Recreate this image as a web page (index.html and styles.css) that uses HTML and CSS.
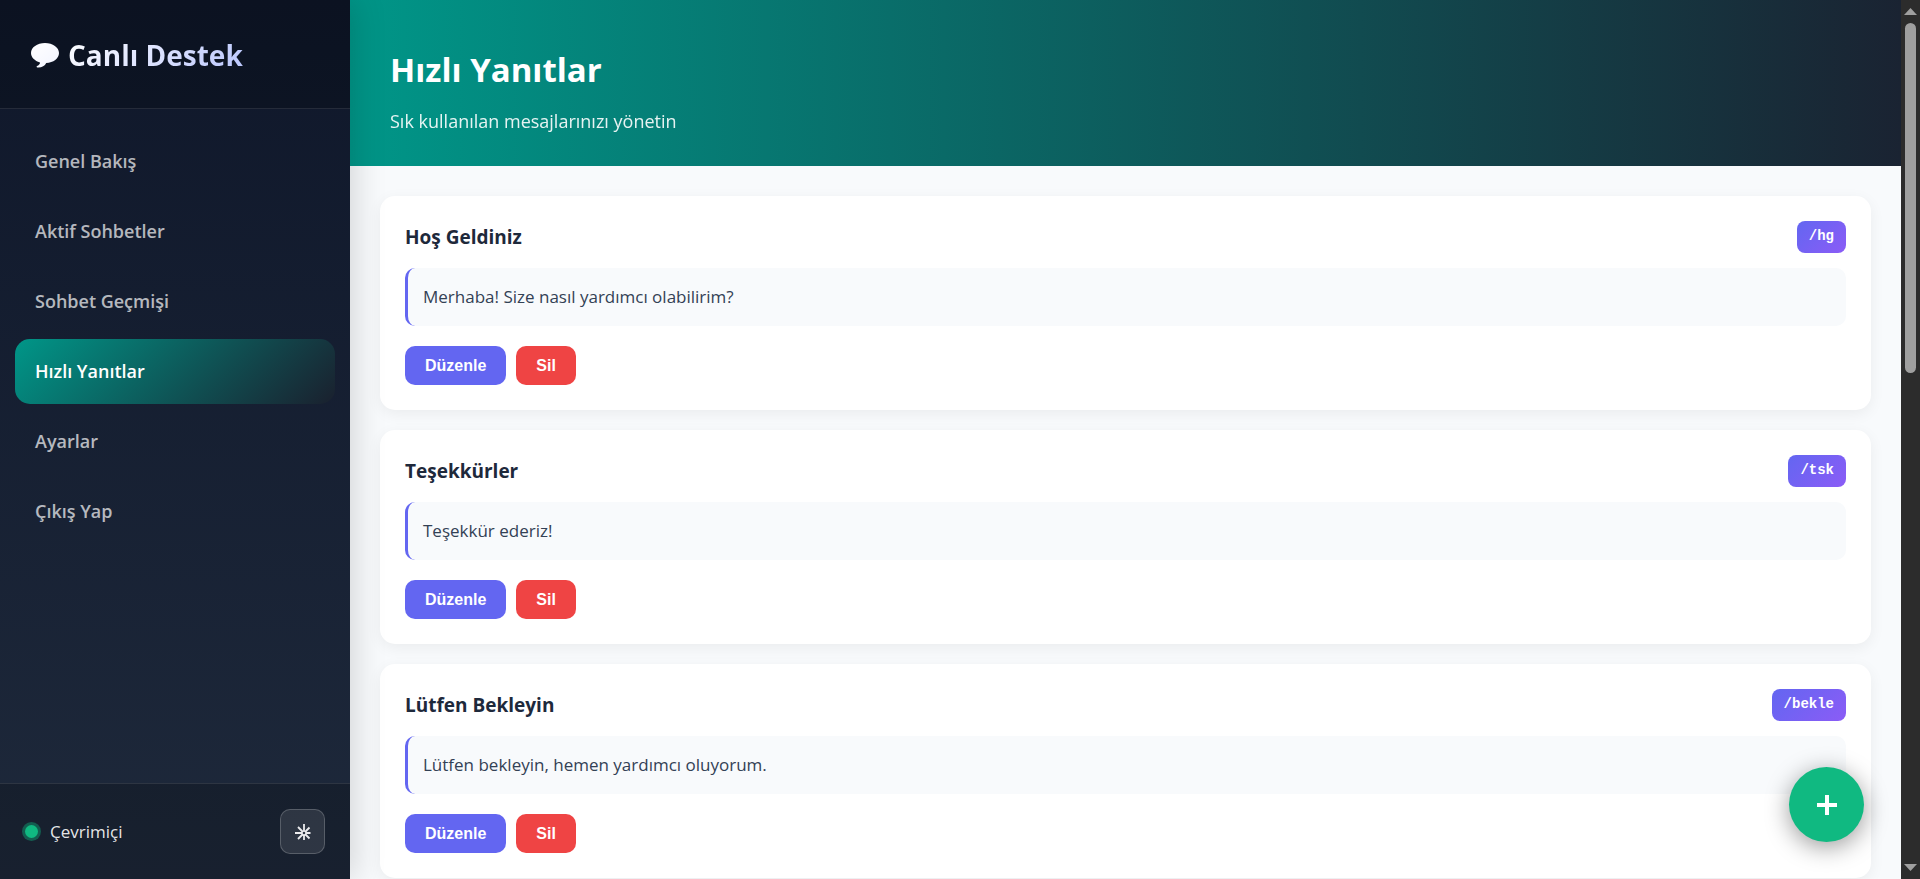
FILE: index.html
```html
<!DOCTYPE html>
<html lang="tr">
<head>
<meta charset="utf-8">
<meta name="viewport" content="width=device-width, initial-scale=1">
<title>Canlı Destek - Hızlı Yanıtlar</title>
<link rel="stylesheet" href="styles.css">
</head>
<body>
<div class="app">
  <aside class="sidebar">
    <div class="brand">
      <svg class="brand-icon" viewBox="0 0 28 25" aria-hidden="true">
        <defs>
          <linearGradient id="bubble" x1="0" y1="0" x2="1" y2="1">
            <stop offset="0" stop-color="#ffffff"/>
            <stop offset="1" stop-color="#f2f4ff"/>
          </linearGradient>
        </defs>
        <path fill="url(#bubble)" d="M14 0C6.200 0 0 4.400 0 10c0 4.200 3.600 7.900 9 9.400 0 1.600-1.200 2.800-3 3.600-.7.400-.5 1.400.4 1.500 4.200.3 7.400-1.500 8.800-4.500C22.400 19.700 28 15.500 28 10S21.800 0 14 0z"/>
      </svg>
      <span class="brand-name">Canlı Destek</span>
    </div>
    <nav class="nav">
      <a class="nav-link" href="#genel">Genel Bakış</a>
      <a class="nav-link" href="#sohbetler">Aktif Sohbetler</a>
      <a class="nav-link" href="#gecmis">Sohbet Geçmişi</a>
      <a class="nav-link active" href="#yanitlar" aria-current="page">Hızlı Yanıtlar</a>
      <a class="nav-link" href="#ayarlar">Ayarlar</a>
      <a class="nav-link" href="#cikis">Çıkış Yap</a>
    </nav>
    <div class="sidebar-footer">
      <div class="status"><span class="status-dot"></span>Çevrimiçi</div>
      <button class="theme-toggle" type="button" aria-label="Tema">
        <svg viewBox="0 0 16 16" aria-hidden="true">
          <g fill="none" stroke="currentColor" stroke-width="1.800">
            <circle cx="9" cy="9" r="2.200"/>
            <path d="M9 0v6M9 12v4M0 9h6M12 9h3.500M3 3l4 4M14.500 3.500L11 7M3 15l4-4M14.500 14.500L11 11"/>
          </g>
        </svg>
      </button>
    </div>
  </aside>

  <main class="main">
    <header class="page-header">
      <h1 class="page-title">Hızlı Yanıtlar</h1>
      <p class="page-subtitle">Sık kullanılan mesajlarınızı yönetin</p>
    </header>
    <div class="replies">
      <article class="card">
        <div class="card-head">
          <h2 class="card-title">Hoş Geldiniz</h2>
          <code class="shortcut">/hg</code>
        </div>
        <p class="message">Merhaba! Size nasıl yardımcı olabilirim?</p>
        <div class="actions">
          <button class="btn btn-edit" type="button">Düzenle</button>
          <button class="btn btn-delete" type="button">Sil</button>
        </div>
      </article>
      <article class="card">
        <div class="card-head">
          <h2 class="card-title">Teşekkürler</h2>
          <code class="shortcut">/tsk</code>
        </div>
        <p class="message">Teşekkür ederiz!</p>
        <div class="actions">
          <button class="btn btn-edit" type="button">Düzenle</button>
          <button class="btn btn-delete" type="button">Sil</button>
        </div>
      </article>
      <article class="card">
        <div class="card-head">
          <h2 class="card-title">Lütfen Bekleyin</h2>
          <code class="shortcut">/bekle</code>
        </div>
        <p class="message">Lütfen bekleyin, hemen yardımcı oluyorum.</p>
        <div class="actions">
          <button class="btn btn-edit" type="button">Düzenle</button>
          <button class="btn btn-delete" type="button">Sil</button>
        </div>
      </article>
    </div>
  </main>

  <div class="scrollbar" aria-hidden="true">
    <svg class="scroll-arrow" viewBox="0 0 13 7"><path d="M6.500 0L13 7H0z"/></svg>
    <div class="scroll-track"><div class="scroll-thumb"></div></div>
    <svg class="scroll-arrow" viewBox="0 0 13 7"><path d="M0 0h13L6.500 7z"/></svg>
  </div>

  <button class="fab" type="button" aria-label="Yeni yanıt ekle">
    <svg viewBox="0 0 20 20" aria-hidden="true"><path d="M10 0v20M0 10h20" stroke="currentColor" stroke-width="4"/></svg>
  </button>
</div>
</body>
</html>
```
FILE: styles.css
```css
* {
  box-sizing: border-box;
  margin: 0;
  padding: 0;
}

body {
  font-family: "Open Sans", "Noto Sans", sans-serif;
  background: #f8fafc;
  color: #1e293b;
}

.app {
  display: grid;
  grid-template-columns: 350px 1fr 19px;
  height: 100vh;
  overflow: hidden;
}

.sidebar {
  position: relative;
  z-index: 1;
  display: flex;
  flex-direction: column;
  background: linear-gradient(180deg, #0f172a 0%, #1e293b 100%);
  box-shadow: 5px 0 30px rgba(0, 0, 0, 0.15);
}

.brand {
  display: flex;
  align-items: center;
  gap: 9px;
  height: 109px;
  padding: 2px 30px 0 31px;
  background: rgba(0, 0, 0, 0.2);
  border-bottom: 1px solid rgba(255, 255, 255, 0.1);
}

.brand-icon {
  width: 28px;
  height: 25px;
}

.brand-name {
  font-size: 28px;
  line-height: 40px;
  font-weight: 700;
  color: transparent;
  background: linear-gradient(135deg, #ffffff 0%, #b9c5fd 100%);
  background-clip: text;
  -webkit-background-clip: text;
}

.nav {
  display: flex;
  flex: 1;
  flex-direction: column;
  gap: 5px;
  padding: 20px 15px;
}

.nav-link {
  padding: 20px;
  border-radius: 15px;
  font-size: 18px;
  line-height: 25px;
  font-weight: 600;
  color: rgba(255, 255, 255, 0.7);
  text-decoration: none;
}

.nav-link.active {
  color: #ffffff;
  background: linear-gradient(135deg, #009688 0%, #1a202e 100%);
}

.sidebar-footer {
  display: flex;
  align-items: center;
  justify-content: space-between;
  padding: 25px;
  background: rgba(0, 0, 0, 0.2);
  border-top: 1px solid rgba(255, 255, 255, 0.1);
}

.status {
  display: flex;
  align-items: center;
  gap: 12px;
  font-size: 17px;
  line-height: 25px;
  color: rgba(255, 255, 255, 0.9);
}

.status-dot {
  width: 13px;
  height: 13px;
  border-radius: 50%;
  background: #10b981;
  box-shadow: 0 0 0 3px rgba(16, 185, 129, 0.4);
}

.theme-toggle {
  display: grid;
  place-items: center;
  width: 45px;
  height: 45px;
  border: 1px solid rgba(255, 255, 255, 0.2);
  border-radius: 10px;
  background: rgba(255, 255, 255, 0.1);
  color: #ececee;
}

.theme-toggle svg {
  width: 16px;
  height: 16px;
}

.main {
  overflow: hidden;
}

.page-header {
  padding: 45px 40px 31px;
  background: linear-gradient(90deg, #009688 0%, #1a2332 100%);
  color: #ffffff;
}

.page-title {
  font-size: 33px;
  line-height: 50px;
  font-weight: 700;
}

.page-subtitle {
  margin-top: 13px;
  font-size: 18px;
  line-height: 27px;
  opacity: 0.9;
}

.replies {
  display: flex;
  flex-direction: column;
  gap: 20px;
  padding: 30px;
}

.card {
  padding: 25px;
  border-radius: 15px;
  background: #ffffff;
  box-shadow: 0 4px 15px rgba(0, 0, 0, 0.06);
}

.card-head {
  display: flex;
  align-items: center;
  justify-content: space-between;
  margin-bottom: 15px;
}

.card-title {
  font-size: 19px;
  line-height: 32px;
  font-weight: 700;
}

.shortcut {
  padding: 5px 12px 7px;
  border-radius: 8px;
  background: linear-gradient(135deg, #6366f1 0%, #8b5cf6 100%);
  color: #ffffff;
  font-family: "Liberation Mono", monospace;
  font-size: 14px;
  line-height: 20px;
  font-weight: 700;
}

.message {
  margin-bottom: 20px;
  padding: 15px;
  border-left: 3px solid #6366f1;
  border-radius: 10px;
  background: #f8fafc;
  color: #334155;
  font-size: 17px;
  line-height: 28px;
}

.actions {
  display: flex;
  gap: 10px;
}

.btn {
  padding: 10px 20px;
  border: 0;
  border-radius: 10px;
  color: #ffffff;
  font-family: "Liberation Sans", Arial, sans-serif;
  font-size: 16px;
  line-height: 19px;
  font-weight: 700;
}

.btn-edit {
  background: #6366f1;
}

.btn-delete {
  background: #ef4444;
}

.scrollbar {
  display: flex;
  flex-direction: column;
  align-items: center;
  padding: 8px 0;
  background: #2c2c2c;
}

.scroll-arrow {
  width: 13px;
  height: 7px;
  fill: #9f9f9f;
}

.scroll-track {
  flex: 1;
  width: 11px;
  padding: 8px 0;
}

.scroll-thumb {
  height: 42%;
  border-radius: 6px;
  background: #9f9f9f;
}

.fab {
  position: fixed;
  right: 56px;
  bottom: 37px;
  z-index: 2;
  display: grid;
  place-items: center;
  width: 75px;
  height: 75px;
  border: 0;
  border-radius: 50%;
  background: #10b981;
  box-shadow: 0 5px 25px rgba(0, 0, 0, 0.4);
  color: #ffffff;
}

.fab svg {
  width: 20px;
  height: 20px;
}
```
